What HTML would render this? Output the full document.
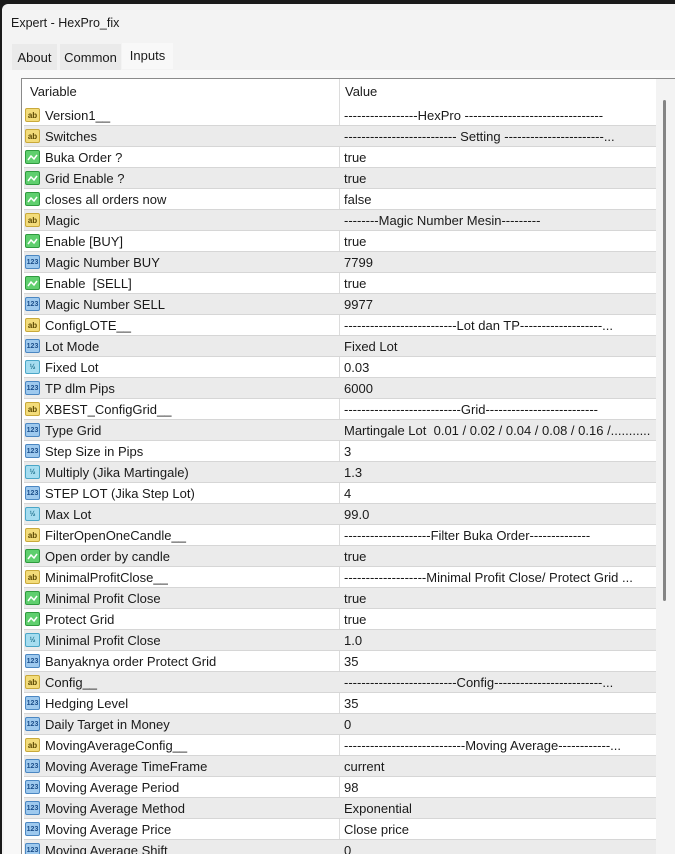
<!DOCTYPE html>
<html style="width:675px;height:854px;overflow:hidden"><head><meta charset="utf-8"><style>
*{margin:0;padding:0;box-sizing:border-box}
body{width:675px;height:854px;overflow:hidden;background:#1a1a1a;font-family:"Liberation Sans",sans-serif;font-size:13px;color:#1a1a1a;position:relative}
.win{position:absolute;left:2px;top:4px;width:680px;height:860px;background:#f3f3f3;border-top-left-radius:6px}
.title{position:absolute;left:9px;top:12px;font-size:12.5px}
.tab{position:absolute;top:44px;height:26px;background:#eaeaea;font-size:13px;padding-top:6px;text-align:center}
.panel{position:absolute;left:4px;top:70px;width:680px;height:800px;background:#f8f8f8}
.tbl{position:absolute;left:21px;top:78px;width:660px;height:790px;background:#fff;border:1px solid #8a8a8a;border-right:none;overflow:hidden}
.hdr{position:absolute;left:0;top:0;height:25px;width:636px}
.row{position:absolute;left:2px;width:634px;height:21px;border-bottom:1px solid #d6d6d6;white-space:nowrap;overflow:hidden}
.row.g{background:#ebebeb}
.v{position:absolute;left:21px;top:3px}
.val{position:absolute;left:320px;top:3px}
.div{position:absolute;left:317px;top:0;width:1px;height:790px;background:#dcdcdc}
.ic{position:absolute;left:1px;top:3px;width:15px;height:14px;border-radius:2px;font-size:8px;line-height:13px;text-align:center;font-weight:bold}
.ab{background:#f3dc7a;border:1px solid #c9a93a;color:#5a4700}
.bo{background:#5fcf6e;border:1px solid #2e9a3e}
.in{background:#9ec9ee;border:1px solid #4b87c2;color:#1b4e8a;font-size:7px}
.db{background:#a6ddf0;border:1px solid #4aa6c7;color:#1b6e8a;font-size:7px}
.sb{position:absolute;left:656px;top:79px;width:19px;height:775px;background:#f3f3f3}
.th{position:absolute;left:7px;top:21px;width:3px;height:501px;background:#858585;border-radius:2px}
</style></head><body>
<div class="win">
<div class="title">Expert - HexPro_fix</div>
</div>
<div class="panel"></div>
<div class="tab" style="left:12px;width:45px">About</div>
<div class="tab" style="left:60px;width:61px">Common</div>
<div class="tab" style="left:122px;width:51px;background:#f8f8f8;top:43px;padding-top:5px">Inputs</div>
<div class="tbl">
<div class="div"></div>
<div class="hdr"><span style="position:absolute;left:8px;top:5px">Variable</span><span style="position:absolute;left:323px;top:5px">Value</span></div>
<div id="rows"></div>
</div>
<div class="sb"><div class="th"></div></div>
<script>
var d=[
["ab","Version1__","-----------------HexPro --------------------------------"],
["ab","Switches","-------------------------- Setting -----------------------..."],
["bo","Buka Order ?","true"],["bo","Grid Enable ?","true"],["bo","closes all orders now","false"],
["ab","Magic","--------Magic Number Mesin---------"],
["bo","Enable [BUY]","true"],["in","Magic Number BUY","7799"],["bo","Enable&nbsp; [SELL]","true"],["in","Magic Number SELL","9977"],
["ab","ConfigLOTE__","--------------------------Lot dan TP-------------------..."],
["in","Lot Mode","Fixed Lot"],["db","Fixed Lot","0.03"],["in","TP dlm Pips","6000"],
["ab","XBEST_ConfigGrid__","---------------------------Grid--------------------------"],
["in","Type Grid","Martingale Lot&nbsp; 0.01 / 0.02 / 0.04 / 0.08 / 0.16 /..........."],
["in","Step Size in Pips","3"],["db","Multiply (Jika Martingale)","1.3"],["in","STEP LOT (Jika Step Lot)","4"],["db","Max Lot","99.0"],
["ab","FilterOpenOneCandle__","--------------------Filter Buka Order--------------"],
["bo","Open order by candle","true"],
["ab","MinimalProfitClose__","-------------------Minimal Profit Close/ Protect Grid ..."],
["bo","Minimal Profit Close","true"],["bo","Protect Grid","true"],["db","Minimal Profit Close","1.0"],["in","Banyaknya order Protect Grid","35"],
["ab","Config__","--------------------------Config-------------------------..."],
["in","Hedging Level","35"],["in","Daily Target in Money","0"],
["ab","MovingAverageConfig__","----------------------------Moving Average------------..."],
["in","Moving Average TimeFrame","current"],["in","Moving Average Period","98"],["in","Moving Average Method","Exponential"],["in","Moving Average Price","Close price"],["in","Moving Average Shift","0"]];
var t={ab:"ab",bo:"",in:"123",db:"½"};
var h="";
d.forEach(function(r,i){
h+='<div class="row'+(i%2?' g':'')+'" style="top:'+(26+i*21)+'px"><div class="ic '+r[0]+'">'+(r[0]=="bo"?'<svg width="13" height="12" viewBox="0 0 13 12"><path d="M2 9 L5 5 L8 8 L11 4" stroke="#fff" stroke-width="1.5" fill="none"/></svg>':t[r[0]])+'</div><span class="v">'+r[1]+'</span><span class="val">'+r[2]+'</span></div>';
});
document.getElementById("rows").innerHTML=h;
</script>
</body></html>
